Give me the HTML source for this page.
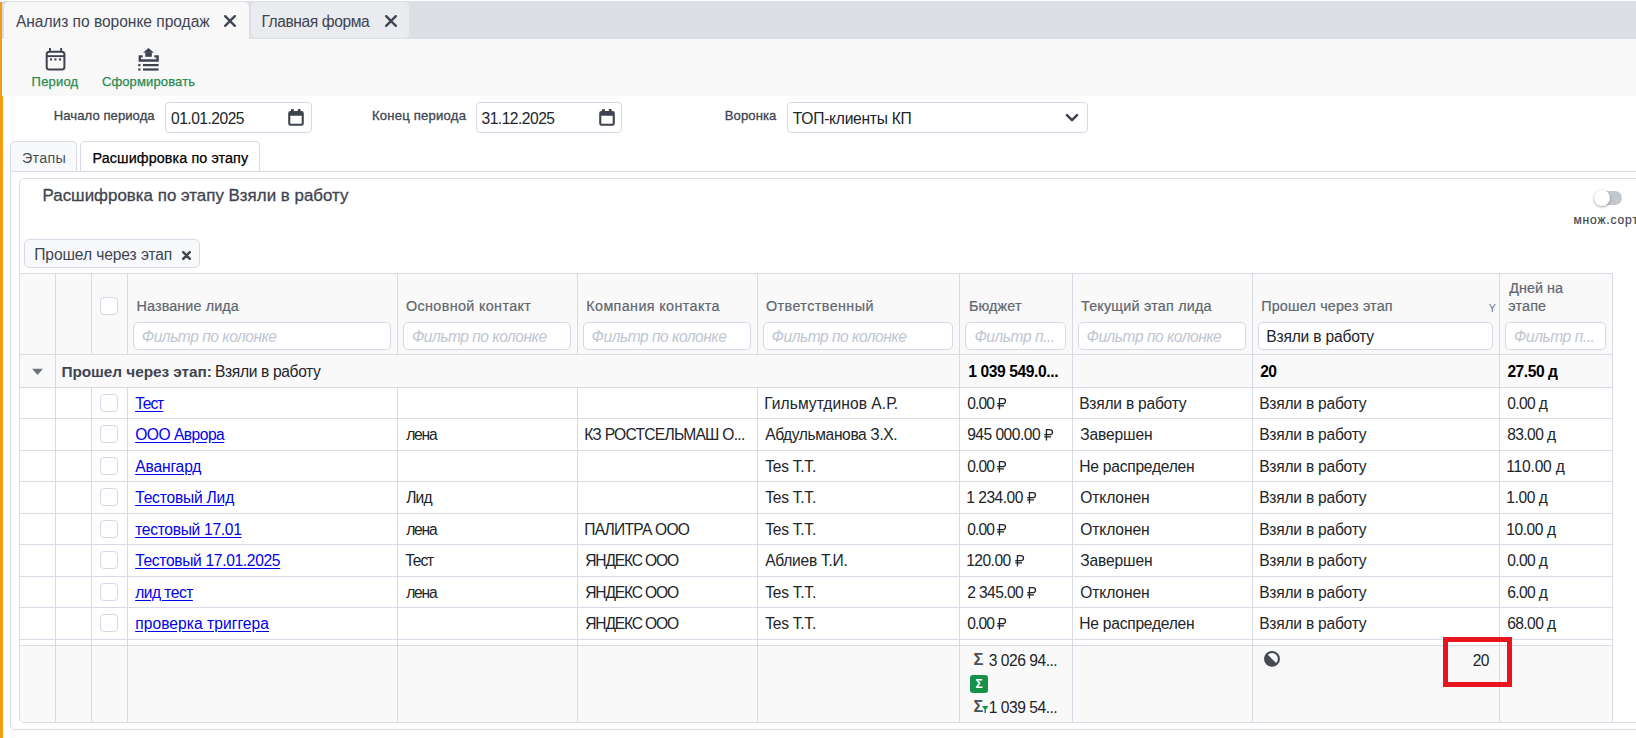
<!DOCTYPE html>
<html><head><meta charset="utf-8"><style>
html,body{margin:0;padding:0;}
body{width:1636px;height:738px;overflow:hidden;position:relative;background:#fff;font-family:"Liberation Sans",sans-serif;white-space:nowrap;}
.rub{vertical-align:baseline;overflow:visible;}
</style></head><body>
<div style="position:absolute;left:2px;top:1px;width:1634px;height:38px;background:#dcdfe4"></div>
<div style="position:absolute;left:0px;top:2px;width:2px;height:94px;background:#f39c12"></div>
<div style="position:absolute;left:0px;top:96px;width:3px;height:642px;background:#f39c12"></div>
<div style="position:absolute;left:2px;top:2px;width:1px;height:37px;background:#d3dce6"></div>
<div style="position:absolute;left:4px;top:2px;width:245px;height:37px;background:#f8f8f9;border-radius:5px 5px 0 0"></div>
<div style="position:absolute;left:251px;top:2px;width:158px;height:36px;background:#e9ebef;border-radius:5px"></div>
<svg style="position:absolute;left:222.5px;top:14.100000000000001px" width="14" height="14" viewBox="-7.0 -7.0 14 14"><path d="M-4.85 -4.85L4.85 4.85M4.85 -4.85L-4.85 4.85" stroke="#3e434f" stroke-width="2.3" stroke-linecap="round"/></svg>
<svg style="position:absolute;left:383.5px;top:14.100000000000001px" width="14" height="14" viewBox="-7.0 -7.0 14 14"><path d="M-4.85 -4.85L4.85 4.85M4.85 -4.85L-4.85 4.85" stroke="#3e434f" stroke-width="2.3" stroke-linecap="round"/></svg>
<div style="position:absolute;left:3px;top:39px;width:1633px;height:57px;background:#f8f8f9"></div>
<svg style="position:absolute;left:44px;top:47px" width="24" height="25" viewBox="44 47 24 25">
<rect x="46.7" y="51.7" width="17.7" height="17.7" rx="2.5" fill="none" stroke="#3e434f" stroke-width="2"/>
<rect x="46" y="55.2" width="19" height="1.9" fill="#3e434f"/>
<rect x="49" y="48" width="1.9" height="3.5" fill="#3e434f"/>
<rect x="60.2" y="48" width="1.9" height="3.5" fill="#3e434f"/>
<rect x="50" y="58.4" width="2.1" height="2.1" fill="#3e434f"/>
<rect x="54.4" y="58.4" width="2.1" height="2.1" fill="#3e434f"/>
<rect x="58.9" y="58.4" width="2.1" height="2.1" fill="#3e434f"/>
</svg>
<svg style="position:absolute;left:136px;top:46px" width="25" height="27" viewBox="136 46 25 27">
<path d="M143.1 52.7 L148.5 48 L153.9 52.7 Z" fill="#3e434f"/>
<rect x="145.3" y="52.5" width="6.5" height="4.3" fill="#3e434f"/>
<path d="M142.7 56.4 H139.8 V60.5 H157.6 V56.4 H154.3" fill="none" stroke="#3e434f" stroke-width="2.4"/>
<rect x="138.3" y="64" width="2.2" height="2.2" fill="#3e434f"/>
<rect x="143" y="64" width="15.6" height="2.2" fill="#3e434f"/>
<rect x="138.3" y="68.4" width="2.2" height="2.2" fill="#3e434f"/>
<rect x="143" y="68.4" width="15.6" height="2.2" fill="#3e434f"/>
</svg>
<div style="position:absolute;left:165px;top:102px;width:147px;height:31px;box-sizing:border-box;border:1px solid #d5d9e5;border-radius:4px;background:#fff"></div>
<svg style="position:absolute;left:288px;top:109px" width="17" height="18" viewBox="0 0 17 18">
<path d="M0.2 4.2 Q0.2 2 2.4 2 H13.6 Q15.8 2 15.8 4.2 V14.6 Q15.8 16.8 13.6 16.8 H2.4 Q0.2 16.8 0.2 14.6 Z M2.3 6.7 V14.7 H13.7 V6.7 Z" fill="#3e434f" fill-rule="evenodd"/>
<rect x="3" y="0" width="2.8" height="3" rx="0.6" fill="#3e434f"/>
<rect x="9.8" y="0" width="2.8" height="3" rx="0.6" fill="#3e434f"/>
</svg>
<div style="position:absolute;left:476px;top:102px;width:146px;height:31px;box-sizing:border-box;border:1px solid #d5d9e5;border-radius:4px;background:#fff"></div>
<svg style="position:absolute;left:599px;top:109px" width="17" height="18" viewBox="0 0 17 18">
<path d="M0.2 4.2 Q0.2 2 2.4 2 H13.6 Q15.8 2 15.8 4.2 V14.6 Q15.8 16.8 13.6 16.8 H2.4 Q0.2 16.8 0.2 14.6 Z M2.3 6.7 V14.7 H13.7 V6.7 Z" fill="#3e434f" fill-rule="evenodd"/>
<rect x="3" y="0" width="2.8" height="3" rx="0.6" fill="#3e434f"/>
<rect x="9.8" y="0" width="2.8" height="3" rx="0.6" fill="#3e434f"/>
</svg>
<div style="position:absolute;left:787px;top:102px;width:301px;height:31px;box-sizing:border-box;border:1px solid #d5d9e5;border-radius:4px;background:#fff"></div>
<svg style="position:absolute;left:1064px;top:111px" width="16" height="14" viewBox="0 0 16 14"><path d="M3 4.2 L8 9.2 L13 4.2" fill="none" stroke="#3e434f" stroke-width="2.6" stroke-linecap="round" stroke-linejoin="round"/></svg>
<div style="position:absolute;left:10px;top:141px;width:67px;height:31px;box-sizing:border-box;border:1px solid #d8dbe6;border-bottom:none;border-radius:5px 5px 0 0;background:#f8f9fa"></div>
<div style="position:absolute;left:80px;top:141px;width:180px;height:31px;box-sizing:border-box;border:1px solid #d8dbe6;border-bottom:none;border-radius:5px 5px 0 0;background:#fff"></div>
<div style="position:absolute;left:10px;top:171px;width:1640px;height:559px;box-sizing:border-box;border:1px solid #d8dbe6;border-radius:0 0 0 5px"></div>
<div style="position:absolute;left:19px;top:178px;width:1640px;height:545px;box-sizing:border-box;border:1px solid #d8dbe6;border-radius:5px 0 0 5px"></div>
<div style="position:absolute;left:1594px;top:191px;width:28px;height:14px;background:#c3c7ce;border-radius:7px"></div>
<div style="position:absolute;left:1593.5px;top:189.7px;width:16.5px;height:16.5px;background:#fff;border-radius:50%;box-shadow:0 1px 3px rgba(0,0,0,0.35)"></div>
<div style="position:absolute;left:24px;top:239px;width:176px;height:29px;box-sizing:border-box;border:1px solid #d8dbe6;border-radius:5px;background:#f8f9fa"></div>
<svg style="position:absolute;left:180.5px;top:250.3px" width="11" height="11" viewBox="-5.5 -5.5 11 11"><path d="M-3.3 -3.3L3.3 3.3M3.3 -3.3L-3.3 3.3" stroke="#3e434f" stroke-width="2.4" stroke-linecap="round"/></svg>
<div style="position:absolute;left:20px;top:274px;width:1592px;height:80px;background:#f9f9fa"></div>
<div style="position:absolute;left:20px;top:355px;width:1592px;height:32px;background:#f9f9fa"></div>
<div style="position:absolute;left:20px;top:646px;width:1592px;height:76px;background:#f9f9fa;border-radius:0 0 0 4px"></div>
<div style="position:absolute;left:19px;top:273px;width:1594px;height:1px;background:#d8dbe6"></div>
<div style="position:absolute;left:19px;top:354px;width:1594px;height:1px;background:#d8dbe6"></div>
<div style="position:absolute;left:19px;top:387px;width:1594px;height:1px;background:#d8dbe6"></div>
<div style="position:absolute;left:19px;top:418px;width:1594px;height:1px;background:#d8dbe6"></div>
<div style="position:absolute;left:19px;top:450px;width:1594px;height:1px;background:#d8dbe6"></div>
<div style="position:absolute;left:19px;top:481px;width:1594px;height:1px;background:#d8dbe6"></div>
<div style="position:absolute;left:19px;top:513px;width:1594px;height:1px;background:#d8dbe6"></div>
<div style="position:absolute;left:19px;top:544px;width:1594px;height:1px;background:#d8dbe6"></div>
<div style="position:absolute;left:19px;top:576px;width:1594px;height:1px;background:#d8dbe6"></div>
<div style="position:absolute;left:19px;top:607px;width:1594px;height:1px;background:#d8dbe6"></div>
<div style="position:absolute;left:19px;top:639px;width:1594px;height:1px;background:#d8dbe6"></div>
<div style="position:absolute;left:19px;top:645px;width:1594px;height:1px;background:#d8dbe6"></div>
<div style="position:absolute;left:1612px;top:273px;width:1px;height:449px;background:#d8dbe6"></div>
<div style="position:absolute;left:55px;top:273px;width:1px;height:81px;background:#d8dbe6"></div>
<div style="position:absolute;left:55px;top:387px;width:1px;height:335px;background:#d8dbe6"></div>
<div style="position:absolute;left:91px;top:273px;width:1px;height:81px;background:#d8dbe6"></div>
<div style="position:absolute;left:91px;top:387px;width:1px;height:335px;background:#d8dbe6"></div>
<div style="position:absolute;left:127px;top:273px;width:1px;height:81px;background:#d8dbe6"></div>
<div style="position:absolute;left:127px;top:387px;width:1px;height:335px;background:#d8dbe6"></div>
<div style="position:absolute;left:397px;top:273px;width:1px;height:81px;background:#d8dbe6"></div>
<div style="position:absolute;left:397px;top:387px;width:1px;height:335px;background:#d8dbe6"></div>
<div style="position:absolute;left:577px;top:273px;width:1px;height:81px;background:#d8dbe6"></div>
<div style="position:absolute;left:577px;top:387px;width:1px;height:335px;background:#d8dbe6"></div>
<div style="position:absolute;left:757px;top:273px;width:1px;height:81px;background:#d8dbe6"></div>
<div style="position:absolute;left:757px;top:387px;width:1px;height:335px;background:#d8dbe6"></div>
<div style="position:absolute;left:959px;top:273px;width:1px;height:81px;background:#d8dbe6"></div>
<div style="position:absolute;left:959px;top:387px;width:1px;height:335px;background:#d8dbe6"></div>
<div style="position:absolute;left:1072px;top:273px;width:1px;height:81px;background:#d8dbe6"></div>
<div style="position:absolute;left:1072px;top:387px;width:1px;height:335px;background:#d8dbe6"></div>
<div style="position:absolute;left:1252px;top:273px;width:1px;height:81px;background:#d8dbe6"></div>
<div style="position:absolute;left:1252px;top:387px;width:1px;height:335px;background:#d8dbe6"></div>
<div style="position:absolute;left:1499px;top:273px;width:1px;height:81px;background:#d8dbe6"></div>
<div style="position:absolute;left:1499px;top:387px;width:1px;height:335px;background:#d8dbe6"></div>
<div style="position:absolute;left:55px;top:354px;width:1px;height:33px;background:#d8dbe6"></div>
<div style="position:absolute;left:959px;top:354px;width:1px;height:33px;background:#d8dbe6"></div>
<div style="position:absolute;left:1072px;top:354px;width:1px;height:33px;background:#d8dbe6"></div>
<div style="position:absolute;left:1252px;top:354px;width:1px;height:33px;background:#d8dbe6"></div>
<div style="position:absolute;left:1499px;top:354px;width:1px;height:33px;background:#d8dbe6"></div>
<div style="position:absolute;left:100px;top:297px;width:18px;height:18px;box-sizing:border-box;border:1px solid #d5d9e5;border-radius:4px;background:#fff"></div>
<div style="position:absolute;left:133px;top:322px;width:258px;height:28px;box-sizing:border-box;border:1px solid #d5d9e5;border-radius:5px;background:#fff"></div>
<div style="position:absolute;left:403px;top:322px;width:168px;height:28px;box-sizing:border-box;border:1px solid #d5d9e5;border-radius:5px;background:#fff"></div>
<div style="position:absolute;left:583px;top:322px;width:168px;height:28px;box-sizing:border-box;border:1px solid #d5d9e5;border-radius:5px;background:#fff"></div>
<div style="position:absolute;left:763px;top:322px;width:190px;height:28px;box-sizing:border-box;border:1px solid #d5d9e5;border-radius:5px;background:#fff"></div>
<div style="position:absolute;left:965px;top:322px;width:101px;height:28px;box-sizing:border-box;border:1px solid #d5d9e5;border-radius:5px;background:#fff"></div>
<div style="position:absolute;left:1078px;top:322px;width:168px;height:28px;box-sizing:border-box;border:1px solid #d5d9e5;border-radius:5px;background:#fff"></div>
<div style="position:absolute;left:1258px;top:322px;width:235px;height:28px;box-sizing:border-box;border:1px solid #d5d9e5;border-radius:5px;background:#fff"></div>
<div style="position:absolute;left:1505px;top:322px;width:101px;height:28px;box-sizing:border-box;border:1px solid #d5d9e5;border-radius:5px;background:#fff"></div>
<svg style="position:absolute;left:31px;top:368px" width="13" height="8" viewBox="0 0 13 8"><path d="M1 0.8 H12 L6.5 7 Z" fill="#6c737d"/></svg>
<div style="position:absolute;left:100px;top:394px;width:18px;height:18px;box-sizing:border-box;border:1px solid #d5d9e5;border-radius:4px;background:#fff"></div>
<div style="position:absolute;left:100px;top:425px;width:18px;height:18px;box-sizing:border-box;border:1px solid #d5d9e5;border-radius:4px;background:#fff"></div>
<div style="position:absolute;left:100px;top:457px;width:18px;height:18px;box-sizing:border-box;border:1px solid #d5d9e5;border-radius:4px;background:#fff"></div>
<div style="position:absolute;left:100px;top:488px;width:18px;height:18px;box-sizing:border-box;border:1px solid #d5d9e5;border-radius:4px;background:#fff"></div>
<div style="position:absolute;left:100px;top:520px;width:18px;height:18px;box-sizing:border-box;border:1px solid #d5d9e5;border-radius:4px;background:#fff"></div>
<div style="position:absolute;left:100px;top:551px;width:18px;height:18px;box-sizing:border-box;border:1px solid #d5d9e5;border-radius:4px;background:#fff"></div>
<div style="position:absolute;left:100px;top:583px;width:18px;height:18px;box-sizing:border-box;border:1px solid #d5d9e5;border-radius:4px;background:#fff"></div>
<div style="position:absolute;left:100px;top:614px;width:18px;height:18px;box-sizing:border-box;border:1px solid #d5d9e5;border-radius:4px;background:#fff"></div>
<div style="position:absolute;left:973.5px;top:651px;font:700 16.5px 'Liberation Sans';color:#4a4f5a;line-height:16px">Σ</div>
<div style="position:absolute;left:970px;top:675px;width:18px;height:18px;background:#17904a;border-radius:3px"></div>
<div style="position:absolute;left:970px;top:675px;width:18px;text-align:center;font:700 12px 'Liberation Sans';color:#fff;line-height:18px">Σ</div>
<div style="position:absolute;left:973.5px;top:698px;font:700 16.2px 'Liberation Sans';color:#4a4f5a;line-height:16px">Σ</div>
<svg style="position:absolute;left:982px;top:706px" width="7" height="8" viewBox="0 0 7 8"><path d="M0 0 H6.5 L4 3.5 V7 H2.5 V3.5 Z" fill="#17904a"/></svg>
<svg style="position:absolute;left:1264px;top:651px" width="17" height="17" viewBox="0 0 17 17"><circle cx="8" cy="7.9" r="6.9" fill="none" stroke="#454a55" stroke-width="2.1"/><path d="M3.12 3.02 A6.9 6.9 0 0 0 12.88 12.78 Z" fill="#454a55"/></svg>
<div style="position:absolute;left:1443px;top:637px;width:69px;height:50px;box-sizing:border-box;border:5px solid #e8141e"></div>
<div style="position:absolute;left:15.90px;top:13px;font-size:15.6px;line-height:17px;font-weight:400;font-style:normal;color:#3e4451;letter-spacing:-0.043px;">Анализ по воронке продаж</div>
<div style="position:absolute;left:261.40px;top:13px;font-size:15.6px;line-height:17px;font-weight:400;font-style:normal;color:#3e4451;letter-spacing:-0.417px;">Главная форма</div>
<div style="position:absolute;left:31.60px;top:74px;font-size:13px;line-height:15px;font-weight:400;font-style:normal;color:#2b8a4e;-webkit-text-stroke:0.25px currentColor;letter-spacing:0.200px;">Период</div>
<div style="position:absolute;left:101.90px;top:74px;font-size:13px;line-height:15px;font-weight:400;font-style:normal;color:#2b8a4e;-webkit-text-stroke:0.25px currentColor;letter-spacing:0.136px;">Сформировать</div>
<div style="position:absolute;left:53.80px;top:108px;font-size:13.1px;line-height:15px;font-weight:400;font-style:normal;color:#3e4451;-webkit-text-stroke:0.3px currentColor;letter-spacing:0.054px;">Начало периода</div>
<div style="position:absolute;left:171.00px;top:110px;font-size:15.6px;line-height:17px;font-weight:400;font-style:normal;color:#212529;letter-spacing:-0.500px;">01.01.2025</div>
<div style="position:absolute;left:372.00px;top:108px;font-size:13.1px;line-height:15px;font-weight:400;font-style:normal;color:#3e4451;-webkit-text-stroke:0.3px currentColor;letter-spacing:0.208px;">Конец периода</div>
<div style="position:absolute;left:481.50px;top:110px;font-size:15.6px;line-height:17px;font-weight:400;font-style:normal;color:#212529;letter-spacing:-0.500px;">31.12.2025</div>
<div style="position:absolute;left:724.80px;top:108px;font-size:13.1px;line-height:15px;font-weight:400;font-style:normal;color:#3e4451;-webkit-text-stroke:0.3px currentColor;letter-spacing:0.083px;">Воронка</div>
<div style="position:absolute;left:792.80px;top:110px;font-size:15.6px;line-height:17px;font-weight:400;font-style:normal;color:#212529;letter-spacing:-0.269px;">ТОП-клиенты КП</div>
<div style="position:absolute;left:22.00px;top:150px;font-size:14.35px;line-height:16px;font-weight:400;font-style:normal;color:#495057;letter-spacing:0.250px;">Этапы</div>
<div style="position:absolute;left:92.60px;top:150px;font-size:14.35px;line-height:16px;font-weight:400;font-style:normal;color:#000000;-webkit-text-stroke:0.25px currentColor;letter-spacing:0.095px;">Расшифровка по этапу</div>
<div style="position:absolute;left:42.50px;top:186px;font-size:16.9px;line-height:19px;font-weight:400;font-style:normal;color:#3e4451;-webkit-text-stroke:0.3px currentColor;letter-spacing:0.015px;">Расшифровка по этапу Взяли в работу</div>
<div style="position:absolute;left:1573.40px;top:213px;font-size:12px;line-height:14px;font-weight:400;font-style:normal;color:#3e4451;-webkit-text-stroke:0.2px currentColor;letter-spacing:0.875px;">множ.сорт</div>
<div style="position:absolute;left:34.20px;top:246px;font-size:15.6px;line-height:17px;font-weight:400;font-style:normal;color:#3e4451;letter-spacing:-0.094px;">Прошел через этап</div>
<div style="position:absolute;left:136.50px;top:298px;font-size:14.35px;line-height:16px;font-weight:400;font-style:normal;color:#60666f;-webkit-text-stroke:0.2px currentColor;letter-spacing:0.125px;">Название лида</div>
<div style="position:absolute;left:406.00px;top:298px;font-size:14.35px;line-height:16px;font-weight:400;font-style:normal;color:#60666f;-webkit-text-stroke:0.2px currentColor;letter-spacing:0.360px;">Основной контакт</div>
<div style="position:absolute;left:586.30px;top:298px;font-size:14.35px;line-height:16px;font-weight:400;font-style:normal;color:#60666f;-webkit-text-stroke:0.2px currentColor;letter-spacing:0.375px;">Компания контакта</div>
<div style="position:absolute;left:766.00px;top:298px;font-size:14.35px;line-height:16px;font-weight:400;font-style:normal;color:#60666f;-webkit-text-stroke:0.2px currentColor;letter-spacing:0.417px;">Ответственный</div>
<div style="position:absolute;left:969.00px;top:298px;font-size:14.35px;line-height:16px;font-weight:400;font-style:normal;color:#60666f;-webkit-text-stroke:0.2px currentColor;letter-spacing:0.120px;">Бюджет</div>
<div style="position:absolute;left:1081.00px;top:298px;font-size:14.35px;line-height:16px;font-weight:400;font-style:normal;color:#60666f;-webkit-text-stroke:0.2px currentColor;letter-spacing:0.206px;">Текущий этап лида</div>
<div style="position:absolute;left:1261.20px;top:298px;font-size:14.35px;line-height:16px;font-weight:400;font-style:normal;color:#60666f;-webkit-text-stroke:0.2px currentColor;letter-spacing:0.188px;">Прошел через этап</div>
<div style="position:absolute;left:1509.30px;top:280px;font-size:14.35px;line-height:16px;font-weight:400;font-style:normal;color:#60666f;-webkit-text-stroke:0.2px currentColor;letter-spacing:0.017px;">Дней на</div>
<div style="position:absolute;left:1508.30px;top:298px;font-size:14.35px;line-height:16px;font-weight:400;font-style:normal;color:#60666f;-webkit-text-stroke:0.2px currentColor;letter-spacing:0.150px;">этапе</div>
<div style="position:absolute;left:1488.80px;top:302px;font-size:10.5px;line-height:12px;font-weight:400;font-style:normal;color:#6c737d;">Y</div>
<div style="position:absolute;left:141.80px;top:328px;font-size:15.6px;line-height:17px;font-weight:400;font-style:italic;color:#bfc6d2;letter-spacing:-0.500px;">Фильтр по колонке</div>
<div style="position:absolute;left:411.90px;top:328px;font-size:15.6px;line-height:17px;font-weight:400;font-style:italic;color:#bfc6d2;letter-spacing:-0.500px;">Фильтр по колонке</div>
<div style="position:absolute;left:591.60px;top:328px;font-size:15.6px;line-height:17px;font-weight:400;font-style:italic;color:#bfc6d2;letter-spacing:-0.500px;">Фильтр по колонке</div>
<div style="position:absolute;left:771.60px;top:328px;font-size:15.6px;line-height:17px;font-weight:400;font-style:italic;color:#bfc6d2;letter-spacing:-0.500px;">Фильтр по колонке</div>
<div style="position:absolute;left:974.40px;top:328px;font-size:15.6px;line-height:17px;font-weight:400;font-style:italic;color:#bfc6d2;letter-spacing:-0.470px;">Фильтр п...</div>
<div style="position:absolute;left:1086.50px;top:328px;font-size:15.6px;line-height:17px;font-weight:400;font-style:italic;color:#bfc6d2;letter-spacing:-0.500px;">Фильтр по колонке</div>
<div style="position:absolute;left:1514.10px;top:328px;font-size:15.6px;line-height:17px;font-weight:400;font-style:italic;color:#bfc6d2;letter-spacing:-0.470px;">Фильтр п...</div>
<div style="position:absolute;left:1266.30px;top:328px;font-size:15.6px;line-height:17px;font-weight:400;font-style:normal;color:#212529;letter-spacing:-0.200px;">Взяли в работу</div>
<div style="position:absolute;left:61.40px;top:363px;font-size:15.4px;line-height:17px;font-weight:700;font-style:normal;color:#3e4451;letter-spacing:-0.059px;">Прошел через этап:</div>
<div style="position:absolute;left:215.00px;top:363px;font-size:15.6px;line-height:17px;font-weight:400;font-style:normal;color:#212529;letter-spacing:-0.354px;">Взяли в работу</div>
<div style="position:absolute;left:968.20px;top:363px;font-size:15.6px;line-height:17px;font-weight:700;font-style:normal;color:#000;letter-spacing:-0.385px;">1 039 549.0...</div>
<div style="position:absolute;left:1260.20px;top:363px;font-size:15.6px;line-height:17px;font-weight:700;font-style:normal;color:#000;letter-spacing:-0.600px;">20</div>
<div style="position:absolute;left:1507.40px;top:363px;font-size:15.6px;line-height:17px;font-weight:700;font-style:normal;color:#000;letter-spacing:-0.450px;">27.50 д</div>
<div style="position:absolute;left:135.20px;top:395px;font-size:15.6px;line-height:17px;font-weight:400;font-style:normal;color:#0000ee;letter-spacing:-1.067px;text-decoration:underline;text-underline-offset:1.5px;">Тест</div>
<div style="position:absolute;left:764.20px;top:395px;font-size:15.6px;line-height:17px;font-weight:400;font-style:normal;color:#212529;letter-spacing:0.050px;">Гильмутдинов А.Р.</div>
<div style="position:absolute;left:967.20px;top:395px;font-size:15.6px;line-height:17px;font-weight:400;font-style:normal;color:#212529;letter-spacing:-0.880px;">0.00 <svg class="rub" viewBox="0 0 9 11" width="0.6em" height="0.733em"><path d="M2.35 0V11M2.35 0.65H5.2C7.3 0.65 8.2 1.8 8.2 3.1C8.2 4.5 7.2 5.5 5.2 5.5H0.2M0.2 7.5H6.8" fill="none" stroke="currentColor" stroke-width="1.25"/></svg></div>
<div style="position:absolute;left:1079.20px;top:395px;font-size:15.6px;line-height:17px;font-weight:400;font-style:normal;color:#212529;letter-spacing:-0.238px;">Взяли в работу</div>
<div style="position:absolute;left:1259.20px;top:395px;font-size:15.6px;line-height:17px;font-weight:400;font-style:normal;color:#212529;letter-spacing:-0.238px;">Взяли в работу</div>
<div style="position:absolute;left:1507.20px;top:395px;font-size:15.6px;line-height:17px;font-weight:400;font-style:normal;color:#212529;letter-spacing:-0.600px;">0.00 д</div>
<div style="position:absolute;left:135.20px;top:426px;font-size:15.6px;line-height:17px;font-weight:400;font-style:normal;color:#0000ee;letter-spacing:-0.500px;text-decoration:underline;text-underline-offset:1.5px;">ООО Аврора</div>
<div style="position:absolute;left:406.20px;top:426px;font-size:15.6px;line-height:17px;font-weight:400;font-style:normal;color:#212529;letter-spacing:-1.167px;">лена</div>
<div style="position:absolute;left:584.20px;top:426px;font-size:15.6px;line-height:17px;font-weight:400;font-style:normal;color:#212529;letter-spacing:-0.722px;">КЗ РОСТСЕЛЬМАШ О...</div>
<div style="position:absolute;left:765.20px;top:426px;font-size:15.6px;line-height:17px;font-weight:400;font-style:normal;color:#212529;letter-spacing:-0.387px;">Абдульманова З.Х.</div>
<div style="position:absolute;left:967.20px;top:426px;font-size:15.6px;line-height:17px;font-weight:400;font-style:normal;color:#212529;letter-spacing:-0.518px;">945 000.00 <svg class="rub" viewBox="0 0 9 11" width="0.6em" height="0.733em"><path d="M2.35 0V11M2.35 0.65H5.2C7.3 0.65 8.2 1.8 8.2 3.1C8.2 4.5 7.2 5.5 5.2 5.5H0.2M0.2 7.5H6.8" fill="none" stroke="currentColor" stroke-width="1.25"/></svg></div>
<div style="position:absolute;left:1080.20px;top:426px;font-size:15.6px;line-height:17px;font-weight:400;font-style:normal;color:#212529;letter-spacing:-0.143px;">Завершен</div>
<div style="position:absolute;left:1259.20px;top:426px;font-size:15.6px;line-height:17px;font-weight:400;font-style:normal;color:#212529;letter-spacing:-0.238px;">Взяли в работу</div>
<div style="position:absolute;left:1507.20px;top:426px;font-size:15.6px;line-height:17px;font-weight:400;font-style:normal;color:#212529;letter-spacing:-0.583px;">83.00 д</div>
<div style="position:absolute;left:135.20px;top:458px;font-size:15.6px;line-height:17px;font-weight:400;font-style:normal;color:#0000ee;letter-spacing:-0.143px;text-decoration:underline;text-underline-offset:1.5px;">Авангард</div>
<div style="position:absolute;left:765.20px;top:458px;font-size:15.6px;line-height:17px;font-weight:400;font-style:normal;color:#212529;letter-spacing:-0.214px;">Tes T.T.</div>
<div style="position:absolute;left:967.20px;top:458px;font-size:15.6px;line-height:17px;font-weight:400;font-style:normal;color:#212529;letter-spacing:-0.880px;">0.00 <svg class="rub" viewBox="0 0 9 11" width="0.6em" height="0.733em"><path d="M2.35 0V11M2.35 0.65H5.2C7.3 0.65 8.2 1.8 8.2 3.1C8.2 4.5 7.2 5.5 5.2 5.5H0.2M0.2 7.5H6.8" fill="none" stroke="currentColor" stroke-width="1.25"/></svg></div>
<div style="position:absolute;left:1079.20px;top:458px;font-size:15.6px;line-height:17px;font-weight:400;font-style:normal;color:#212529;letter-spacing:-0.231px;">Не распределен</div>
<div style="position:absolute;left:1259.20px;top:458px;font-size:15.6px;line-height:17px;font-weight:400;font-style:normal;color:#212529;letter-spacing:-0.238px;">Взяли в работу</div>
<div style="position:absolute;left:1506.20px;top:458px;font-size:15.6px;line-height:17px;font-weight:400;font-style:normal;color:#212529;letter-spacing:-0.186px;">110.00 д</div>
<div style="position:absolute;left:135.20px;top:489px;font-size:15.6px;line-height:17px;font-weight:400;font-style:normal;color:#0000ee;letter-spacing:-0.209px;text-decoration:underline;text-underline-offset:1.5px;">Тестовый Лид</div>
<div style="position:absolute;left:406.20px;top:489px;font-size:15.6px;line-height:17px;font-weight:400;font-style:normal;color:#212529;letter-spacing:-0.850px;">Лид</div>
<div style="position:absolute;left:765.20px;top:489px;font-size:15.6px;line-height:17px;font-weight:400;font-style:normal;color:#212529;letter-spacing:-0.214px;">Tes T.T.</div>
<div style="position:absolute;left:966.20px;top:489px;font-size:15.6px;line-height:17px;font-weight:400;font-style:normal;color:#212529;letter-spacing:-0.489px;">1 234.00 <svg class="rub" viewBox="0 0 9 11" width="0.6em" height="0.733em"><path d="M2.35 0V11M2.35 0.65H5.2C7.3 0.65 8.2 1.8 8.2 3.1C8.2 4.5 7.2 5.5 5.2 5.5H0.2M0.2 7.5H6.8" fill="none" stroke="currentColor" stroke-width="1.25"/></svg></div>
<div style="position:absolute;left:1080.20px;top:489px;font-size:15.6px;line-height:17px;font-weight:400;font-style:normal;color:#212529;letter-spacing:-0.100px;">Отклонен</div>
<div style="position:absolute;left:1259.20px;top:489px;font-size:15.6px;line-height:17px;font-weight:400;font-style:normal;color:#212529;letter-spacing:-0.238px;">Взяли в работу</div>
<div style="position:absolute;left:1506.20px;top:489px;font-size:15.6px;line-height:17px;font-weight:400;font-style:normal;color:#212529;letter-spacing:-0.400px;">1.00 д</div>
<div style="position:absolute;left:135.20px;top:521px;font-size:15.6px;line-height:17px;font-weight:400;font-style:normal;color:#0000ee;letter-spacing:-0.308px;text-decoration:underline;text-underline-offset:1.5px;">тестовый 17.01</div>
<div style="position:absolute;left:406.20px;top:521px;font-size:15.6px;line-height:17px;font-weight:400;font-style:normal;color:#212529;letter-spacing:-1.167px;">лена</div>
<div style="position:absolute;left:584.20px;top:521px;font-size:15.6px;line-height:17px;font-weight:400;font-style:normal;color:#212529;letter-spacing:-0.760px;">ПАЛИТРА ООО</div>
<div style="position:absolute;left:765.20px;top:521px;font-size:15.6px;line-height:17px;font-weight:400;font-style:normal;color:#212529;letter-spacing:-0.214px;">Tes T.T.</div>
<div style="position:absolute;left:967.20px;top:521px;font-size:15.6px;line-height:17px;font-weight:400;font-style:normal;color:#212529;letter-spacing:-0.880px;">0.00 <svg class="rub" viewBox="0 0 9 11" width="0.6em" height="0.733em"><path d="M2.35 0V11M2.35 0.65H5.2C7.3 0.65 8.2 1.8 8.2 3.1C8.2 4.5 7.2 5.5 5.2 5.5H0.2M0.2 7.5H6.8" fill="none" stroke="currentColor" stroke-width="1.25"/></svg></div>
<div style="position:absolute;left:1080.20px;top:521px;font-size:15.6px;line-height:17px;font-weight:400;font-style:normal;color:#212529;letter-spacing:-0.100px;">Отклонен</div>
<div style="position:absolute;left:1259.20px;top:521px;font-size:15.6px;line-height:17px;font-weight:400;font-style:normal;color:#212529;letter-spacing:-0.238px;">Взяли в работу</div>
<div style="position:absolute;left:1506.20px;top:521px;font-size:15.6px;line-height:17px;font-weight:400;font-style:normal;color:#212529;letter-spacing:-0.417px;">10.00 д</div>
<div style="position:absolute;left:135.20px;top:552px;font-size:15.6px;line-height:17px;font-weight:400;font-style:normal;color:#0000ee;letter-spacing:-0.333px;text-decoration:underline;text-underline-offset:1.5px;">Тестовый 17.01.2025</div>
<div style="position:absolute;left:405.20px;top:552px;font-size:15.6px;line-height:17px;font-weight:400;font-style:normal;color:#212529;letter-spacing:-1.067px;">Тест</div>
<div style="position:absolute;left:585.20px;top:552px;font-size:15.6px;line-height:17px;font-weight:400;font-style:normal;color:#212529;letter-spacing:-1.167px;">ЯНДЕКС ООО</div>
<div style="position:absolute;left:765.20px;top:552px;font-size:15.6px;line-height:17px;font-weight:400;font-style:normal;color:#212529;letter-spacing:-0.280px;">Аблиев Т.И.</div>
<div style="position:absolute;left:966.20px;top:552px;font-size:15.6px;line-height:17px;font-weight:400;font-style:normal;color:#212529;letter-spacing:-0.529px;">120.00 <svg class="rub" viewBox="0 0 9 11" width="0.6em" height="0.733em"><path d="M2.35 0V11M2.35 0.65H5.2C7.3 0.65 8.2 1.8 8.2 3.1C8.2 4.5 7.2 5.5 5.2 5.5H0.2M0.2 7.5H6.8" fill="none" stroke="currentColor" stroke-width="1.25"/></svg></div>
<div style="position:absolute;left:1080.20px;top:552px;font-size:15.6px;line-height:17px;font-weight:400;font-style:normal;color:#212529;letter-spacing:-0.143px;">Завершен</div>
<div style="position:absolute;left:1259.20px;top:552px;font-size:15.6px;line-height:17px;font-weight:400;font-style:normal;color:#212529;letter-spacing:-0.238px;">Взяли в работу</div>
<div style="position:absolute;left:1507.20px;top:552px;font-size:15.6px;line-height:17px;font-weight:400;font-style:normal;color:#212529;letter-spacing:-0.600px;">0.00 д</div>
<div style="position:absolute;left:135.20px;top:584px;font-size:15.6px;line-height:17px;font-weight:400;font-style:normal;color:#0000ee;letter-spacing:-0.514px;text-decoration:underline;text-underline-offset:1.5px;">лид тест</div>
<div style="position:absolute;left:406.20px;top:584px;font-size:15.6px;line-height:17px;font-weight:400;font-style:normal;color:#212529;letter-spacing:-1.167px;">лена</div>
<div style="position:absolute;left:585.20px;top:584px;font-size:15.6px;line-height:17px;font-weight:400;font-style:normal;color:#212529;letter-spacing:-1.167px;">ЯНДЕКС ООО</div>
<div style="position:absolute;left:765.20px;top:584px;font-size:15.6px;line-height:17px;font-weight:400;font-style:normal;color:#212529;letter-spacing:-0.214px;">Tes T.T.</div>
<div style="position:absolute;left:967.20px;top:584px;font-size:15.6px;line-height:17px;font-weight:400;font-style:normal;color:#212529;letter-spacing:-0.600px;">2 345.00 <svg class="rub" viewBox="0 0 9 11" width="0.6em" height="0.733em"><path d="M2.35 0V11M2.35 0.65H5.2C7.3 0.65 8.2 1.8 8.2 3.1C8.2 4.5 7.2 5.5 5.2 5.5H0.2M0.2 7.5H6.8" fill="none" stroke="currentColor" stroke-width="1.25"/></svg></div>
<div style="position:absolute;left:1080.20px;top:584px;font-size:15.6px;line-height:17px;font-weight:400;font-style:normal;color:#212529;letter-spacing:-0.100px;">Отклонен</div>
<div style="position:absolute;left:1259.20px;top:584px;font-size:15.6px;line-height:17px;font-weight:400;font-style:normal;color:#212529;letter-spacing:-0.238px;">Взяли в работу</div>
<div style="position:absolute;left:1507.20px;top:584px;font-size:15.6px;line-height:17px;font-weight:400;font-style:normal;color:#212529;letter-spacing:-0.600px;">6.00 д</div>
<div style="position:absolute;left:135.20px;top:615px;font-size:15.6px;line-height:17px;font-weight:400;font-style:normal;color:#0000ee;letter-spacing:0.050px;text-decoration:underline;text-underline-offset:1.5px;">проверка триггера</div>
<div style="position:absolute;left:585.20px;top:615px;font-size:15.6px;line-height:17px;font-weight:400;font-style:normal;color:#212529;letter-spacing:-1.167px;">ЯНДЕКС ООО</div>
<div style="position:absolute;left:765.20px;top:615px;font-size:15.6px;line-height:17px;font-weight:400;font-style:normal;color:#212529;letter-spacing:-0.214px;">Tes T.T.</div>
<div style="position:absolute;left:967.20px;top:615px;font-size:15.6px;line-height:17px;font-weight:400;font-style:normal;color:#212529;letter-spacing:-0.880px;">0.00 <svg class="rub" viewBox="0 0 9 11" width="0.6em" height="0.733em"><path d="M2.35 0V11M2.35 0.65H5.2C7.3 0.65 8.2 1.8 8.2 3.1C8.2 4.5 7.2 5.5 5.2 5.5H0.2M0.2 7.5H6.8" fill="none" stroke="currentColor" stroke-width="1.25"/></svg></div>
<div style="position:absolute;left:1079.20px;top:615px;font-size:15.6px;line-height:17px;font-weight:400;font-style:normal;color:#212529;letter-spacing:-0.231px;">Не распределен</div>
<div style="position:absolute;left:1259.20px;top:615px;font-size:15.6px;line-height:17px;font-weight:400;font-style:normal;color:#212529;letter-spacing:-0.238px;">Взяли в работу</div>
<div style="position:absolute;left:1507.20px;top:615px;font-size:15.6px;line-height:17px;font-weight:400;font-style:normal;color:#212529;letter-spacing:-0.583px;">68.00 д</div>
<div style="position:absolute;left:988.70px;top:652px;font-size:15.6px;line-height:17px;font-weight:400;font-style:normal;color:#212529;letter-spacing:-0.470px;">3 026 94...</div>
<div style="position:absolute;left:988.70px;top:699px;font-size:15.6px;line-height:17px;font-weight:400;font-style:normal;color:#212529;letter-spacing:-0.470px;">1 039 54...</div>
<div style="position:absolute;left:1472.80px;top:652px;font-size:15.6px;line-height:17px;font-weight:400;font-style:normal;color:#212529;letter-spacing:-0.800px;">20</div>
</body></html>
